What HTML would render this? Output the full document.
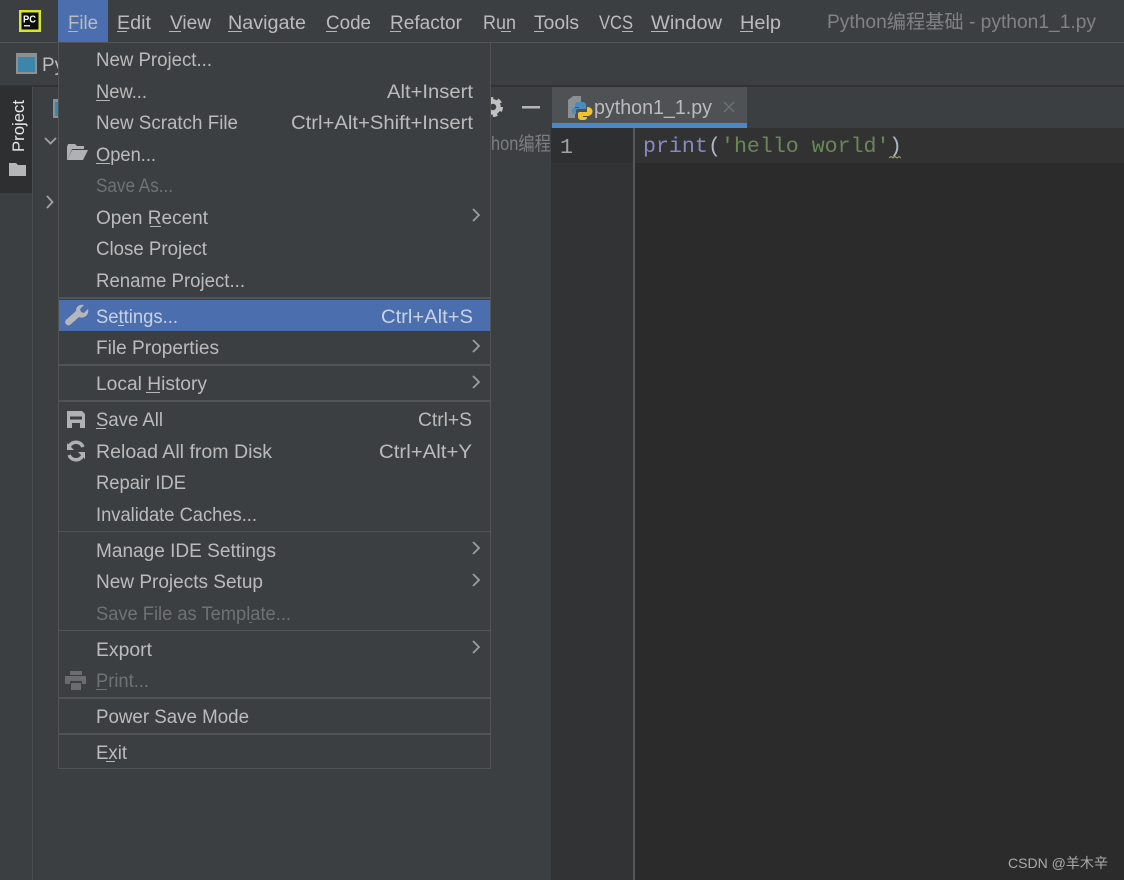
<!DOCTYPE html>
<html><head><meta charset="utf-8"><style>
html,body{margin:0;padding:0;background:#3c3f41;width:1124px;height:880px;overflow:hidden}
svg{display:block;position:absolute;left:0;top:0}
text{font-family:"Liberation Sans","Noto Sans CJK SC",sans-serif;font-size:19px;fill:#bbbbbb}
.d{fill:#6f7274}
.m{fill:#b8b9b9}
.mono{font-family:"Liberation Mono",monospace;font-size:21.600px}
</style></head><body>
<svg width="1124" height="880" viewBox="0 0 1124 880">
<rect width="1124" height="880" fill="#3c3f41"/>
<!-- top -->
<rect y="42" width="1124" height="1" fill="#515354"/>
<rect y="85" width="1124" height="2" fill="#323232"/>
<rect x="0" y="87" width="33" height="793" fill="#3c3f41"/>
<rect x="32" y="87" width="1" height="793" fill="#4b4d4f"/>
<rect x="0" y="87" width="32" height="106" fill="#2d2f30"/>
<!-- logo -->
<rect x="19" y="10" width="22" height="22" fill="#d6e62a"/>
<rect x="21.500" y="12.500" width="17" height="17" fill="#0c0c0c"/>
<text x="23" y="22.500" textLength="13" lengthAdjust="spacingAndGlyphs" style="font-size:10px;font-weight:bold;fill:#fff">PC</text>
<rect x="24" y="25" width="6" height="1.500" fill="#ddd"/>
<!-- menu bar -->
<rect x="58" y="0" width="50" height="42" fill="#4b6eaf"/>
<g class="m">
<text x="68" y="29" textLength="30" lengthAdjust="spacingAndGlyphs">File</text>
<text x="117" y="29" textLength="34" lengthAdjust="spacingAndGlyphs">Edit</text>
<text x="170" y="29" textLength="41" lengthAdjust="spacingAndGlyphs">View</text>
<text x="228" y="29" textLength="78" lengthAdjust="spacingAndGlyphs">Navigate</text>
<text x="326" y="29" textLength="45" lengthAdjust="spacingAndGlyphs">Code</text>
<text x="390" y="29" textLength="72" lengthAdjust="spacingAndGlyphs">Refactor</text>
<text x="483" y="29" textLength="33" lengthAdjust="spacingAndGlyphs">Run</text>
<text x="534" y="29" textLength="45" lengthAdjust="spacingAndGlyphs">Tools</text>
<text x="599" y="29" textLength="34" lengthAdjust="spacingAndGlyphs">VCS</text>
<text x="651" y="29" textLength="71" lengthAdjust="spacingAndGlyphs">Window</text>
<text x="740" y="29" textLength="41" lengthAdjust="spacingAndGlyphs">Help</text>
</g>
<g fill="#b5b6b6">
<rect x="68" y="31" width="10" height="1"/><rect x="117" y="31" width="10" height="1"/><rect x="169" y="31" width="12" height="1"/><rect x="228" y="31" width="14" height="1"/><rect x="326" y="31" width="11" height="1"/><rect x="390" y="31" width="11" height="1"/><rect x="501" y="31" width="10" height="1"/><rect x="534" y="31" width="10" height="1"/><rect x="622" y="31" width="11" height="1"/><rect x="651" y="31" width="17" height="1"/><rect x="740" y="31" width="13" height="1"/>
</g>
<text x="827" y="28" textLength="269" lengthAdjust="spacingAndGlyphs" style="fill:#808284">Python编程基础 - python1_1.py</text>
<!-- nav bar -->
<rect x="16" y="53" width="21" height="21" fill="#8b9092"/>
<rect x="18" y="57" width="17" height="15" fill="#3c86ab"/>
<text x="42" y="71" textLength="22" lengthAdjust="spacingAndGlyphs">Py</text>
<!-- left tool window -->
<text transform="translate(24,152) rotate(-90)" textLength="52" lengthAdjust="spacingAndGlyphs" style="font-size:17px;fill:#e8e8e8">Project</text>
<path d="M9 163h7l2 2h8v11H9z" fill="#b5b6b6"/>
<rect x="53" y="99" width="6" height="19" fill="#8b9092"/>
<rect x="55" y="102" width="4" height="14" fill="#3c86ab"/>
<path d="M45 138l5.500 5.500L56 138" fill="none" stroke="#a0a2a3" stroke-width="1.800"/>
<path d="M47 196l5.500 6-5.500 6" fill="none" stroke="#a0a2a3" stroke-width="1.800"/>
<!-- gear and hide -->
<circle cx="493" cy="107" r="5.500" fill="none" stroke="#c0c1c1" stroke-width="4.500"/>
<circle cx="493" cy="107" r="8.500" fill="none" stroke="#c0c1c1" stroke-width="3" stroke-dasharray="4.500 4.400"/>
<rect x="522" y="106" width="18" height="2.500" fill="#b5b6b6"/>
<text x="491" y="150" textLength="60" lengthAdjust="spacingAndGlyphs" style="fill:#7c7e80">hon编程</text>
<!-- tab -->
<rect x="552" y="87" width="572" height="40" fill="#3c3f41"/>
<rect x="552" y="87" width="195" height="36" fill="#4e5254"/>
<rect x="552" y="123" width="195" height="5" fill="#4a88c7"/>
<path d="M568 100l5-4h8v9h-6v13h-7z" fill="#8a9094"/>
<path d="M578 102h5a3 3 0 0 1 3 3v4h-8a2 2 0 0 0-2 2v3h-1a3 3 0 0 1-1-6h5v-1h-4v-2a3 3 0 0 1 3-3z" fill="#4b8cc0"/>
<path d="M587 107h1a3 3 0 0 1 0 9h-5v1h4v1a3 3 0 0 1-3 2h-3a3 3 0 0 1-3-3v-3a2 2 0 0 1 2-2h7z" fill="#f0c32c"/>
<text x="594" y="114" textLength="118" lengthAdjust="spacingAndGlyphs" style="font-size:20px">python1_1.py</text>
<path d="M724 102l10 10M734 102l-10 10" stroke="#6d7072" stroke-width="1.500"/>
<!-- editor -->
<rect x="551" y="128" width="573" height="752" fill="#2b2b2b"/>
<rect x="551" y="128" width="83" height="752" fill="#313335"/>
<rect x="551" y="128" width="83" height="35" fill="#2d2f30"/>
<rect x="635" y="128" width="489" height="35" fill="#323232"/>
<rect x="633" y="128" width="2" height="752" fill="#555758"/>
<text x="560" y="153" class="mono" style="fill:#a4a3a3">1</text>
<text x="643" y="152" class="mono" style="fill:#8888c6">print</text>
<text x="708" y="152" class="mono" style="fill:#a9b7c6">(</text>
<text x="721" y="152" class="mono" style="fill:#6a8759">'hello world'</text>
<text x="889" y="152" class="mono" style="fill:#a9b7c6">)</text>
<path d="M889 158l2-1.500 2 1.500 2-1.500 2 1.500 2-1.500 2 1.500" fill="none" stroke="#a8a85a" stroke-width="1"/>
<!-- menu -->
<rect x="58.500" y="42.500" width="432" height="726" fill="#3c3f41" stroke="#515354"/>
<rect x="59" y="300" width="431" height="31" fill="#4b6eaf"/>
<g fill="#515354">
<rect x="59" y="297" width="431" height="2"/>
<rect x="59" y="364" width="431" height="2"/>
<rect x="59" y="400" width="431" height="2"/>
<rect x="59" y="531" width="431" height="1"/>
<rect x="59" y="630" width="431" height="1"/>
<rect x="59" y="697" width="431" height="2"/>
<rect x="59" y="733" width="431" height="2"/>
</g>
<g class="m">
<text x="96" y="66" textLength="116" lengthAdjust="spacingAndGlyphs">New Project...</text>
<text x="96" y="98" textLength="51" lengthAdjust="spacingAndGlyphs">New...</text>
<text x="96" y="129" textLength="142" lengthAdjust="spacingAndGlyphs">New Scratch File</text>
<text x="96" y="161" textLength="60" lengthAdjust="spacingAndGlyphs">Open...</text>
<text x="96" y="224" textLength="112" lengthAdjust="spacingAndGlyphs">Open Recent</text>
<text x="96" y="255" textLength="111" lengthAdjust="spacingAndGlyphs">Close Project</text>
<text x="96" y="287" textLength="149" lengthAdjust="spacingAndGlyphs">Rename Project...</text>
<text x="96" y="354" textLength="123" lengthAdjust="spacingAndGlyphs">File Properties</text>
<text x="96" y="390" textLength="111" lengthAdjust="spacingAndGlyphs">Local History</text>
<text x="96" y="426" textLength="67" lengthAdjust="spacingAndGlyphs">Save All</text>
<text x="96" y="458" textLength="176" lengthAdjust="spacingAndGlyphs">Reload All from Disk</text>
<text x="96" y="489" textLength="90" lengthAdjust="spacingAndGlyphs">Repair IDE</text>
<text x="96" y="521" textLength="161" lengthAdjust="spacingAndGlyphs">Invalidate Caches...</text>
<text x="96" y="557" textLength="180" lengthAdjust="spacingAndGlyphs">Manage IDE Settings</text>
<text x="96" y="588" textLength="167" lengthAdjust="spacingAndGlyphs">New Projects Setup</text>
<text x="96" y="656" textLength="56" lengthAdjust="spacingAndGlyphs">Export</text>
<text x="96" y="723" textLength="153" lengthAdjust="spacingAndGlyphs">Power Save Mode</text>
<text x="96" y="759" textLength="31" lengthAdjust="spacingAndGlyphs">Exit</text>
<text x="387" y="98" textLength="86" lengthAdjust="spacingAndGlyphs">Alt+Insert</text>
<text x="291" y="129" textLength="182" lengthAdjust="spacingAndGlyphs">Ctrl+Alt+Shift+Insert</text>
<text x="418" y="426" textLength="54" lengthAdjust="spacingAndGlyphs">Ctrl+S</text>
<text x="379" y="458" textLength="93" lengthAdjust="spacingAndGlyphs">Ctrl+Alt+Y</text>
</g>
<text x="96" y="323" textLength="82" lengthAdjust="spacingAndGlyphs" style="fill:#c8d2e4">Settings...</text>
<text x="381" y="323" textLength="92" lengthAdjust="spacingAndGlyphs" style="fill:#c8d2e4">Ctrl+Alt+S</text>
<text x="96" y="192" textLength="77" lengthAdjust="spacingAndGlyphs" class="d">Save As...</text>
<text x="96" y="620" textLength="195" lengthAdjust="spacingAndGlyphs" class="d">Save File as Template...</text>
<text x="96" y="687" textLength="53" lengthAdjust="spacingAndGlyphs" class="d">Print...</text>
<!-- underlines -->
<g fill="#b5b6b6">
<rect x="96" y="100" width="14" height="1"/><rect x="96" y="163" width="14" height="1"/><rect x="150" y="226" width="11" height="1"/><rect x="118" y="325" width="6" height="1" fill="#c8d2e4"/><rect x="146" y="392" width="14" height="1"/><rect x="96" y="428" width="10" height="1"/><rect x="106" y="761" width="9" height="1"/>
</g>
<rect x="96" y="689" width="11" height="1" fill="#6f7274"/><rect x="249" y="622" width="3" height="1" fill="#6f7274"/>
<!-- arrows -->
<g fill="none" stroke="#9b9d9e" stroke-width="1.800">
<path d="M473 209l6 6-6 6"/><path d="M473 340l6 6-6 6"/><path d="M473 376l6 6-6 6"/><path d="M473 542l6 6-6 6"/><path d="M473 574l6 6-6 6"/><path d="M473 641l6 6-6 6"/>
</g>
<!-- menu icons -->
<path d="M67 147l1-3h7l2 2h7v3H72l-5 11z" fill="#afb1b3"/><path d="M72 150h16l-5 10H67z" fill="#afb1b3"/>
<path d="M67 319l9-8a7 7 0 0 1 1-4 7 7 0 0 1 7-2l-4 4 1 3 3 1 4-4a7 7 0 0 1-2 7 7 7 0 0 1-7 1l-9 8a3 3 0 0 1-3-6z" fill="#b4b8bd"/>
<path d="M67 411h15l3 3v14H67zM70 416.500v3h12v-3zM72 423v5h8v-5z" fill="#afb1b3" fill-rule="evenodd"/>
<path d="M83 447a7.500 7.500 0 0 0-13.500-1M69 455a7.500 7.500 0 0 0 13.500 1" fill="none" stroke="#afb1b3" stroke-width="3.500"/>
<path d="M67 443v7h7zM85 459v-7h-7z" fill="#afb1b3"/>
<path d="M70 671h12v4H70zM65 676h21v8h-4v-3H70v3h-5zM71 683h10v7H71z" fill="#6a6c6e"/>
<!-- watermark -->
<text x="1008" y="868" textLength="100" lengthAdjust="spacingAndGlyphs" style="font-size:14px;fill:#aaaaaa">CSDN @羊木辛</text>
</svg>
</body></html>
